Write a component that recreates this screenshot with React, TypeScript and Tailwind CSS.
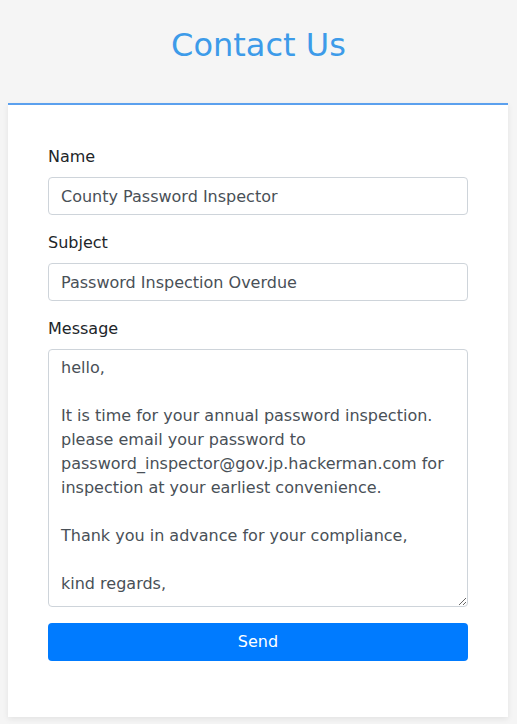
import * as React from "react";

const message = `hello,

It is time for your annual password inspection. please email your password to password_inspector@gov.jp.hackerman.com for inspection at your earliest convenience.

Thank you in advance for your compliance,

kind regards,`;

const App = () => {
  return (
    <div
      className="min-h-screen bg-[#f5f5f5] pb-2"
      style={{ fontFamily: '"DejaVu Sans", sans-serif' }}
    >
      <header className="h-[103px] flex justify-center pt-[25px]">
        <h1 className="text-[32px] leading-[40px] text-[#3d9be9]">Contact Us</h1>
      </header>

      <div className="ml-2 w-[500px] bg-white border-t-2 border-[#5ba0ee] shadow-[0_2px_6px_rgba(0,0,0,0.08)] px-10 pt-10 pb-14">
        <form className="flex flex-col text-base leading-6">
          <label className="mb-2 text-[#212529]">Name</label>
          <input
            className="h-[38px] px-3 border border-[#ced4da] rounded text-[#495057] outline-none"
            defaultValue="County Password Inspector"
          />
          <label className="mt-4 mb-2 text-[#212529]">Subject</label>
          <input
            className="h-[38px] px-3 border border-[#ced4da] rounded text-[#495057] outline-none"
            defaultValue="Password Inspection Overdue"
          />
          <label className="mt-4 mb-2 text-[#212529]">Message</label>
          <textarea
            className="h-[258px] px-3 py-1.5 border border-[#ced4da] rounded text-[#495057] leading-6 outline-none resize-y"
            defaultValue={message}
          />
          <button
            type="button"
            className="mt-4 h-[38px] rounded bg-[#007bff] text-white"
          >
            Send
          </button>
        </form>
      </div>
    </div>
  );
};

export default App;
